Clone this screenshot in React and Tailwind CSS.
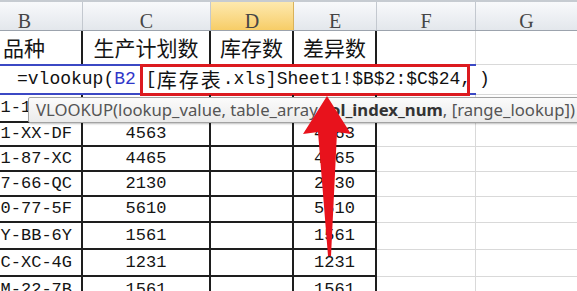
import React from 'react';

const mono = "font-['Liberation_Mono','Noto_Sans_CJK_SC',monospace]";

const rows = [
  { h: 'h-[28px]', b: '1-1A-XC', c: '3542', e: '3542' },
  { h: 'h-[24px]', b: '1-XX-DF', c: '4563', e: '4563' },
  { h: 'h-[25px]', b: '1-87-XC', c: '4465', e: '4465' },
  { h: 'h-[25px]', b: '7-66-QC', c: '2130', e: '2130' },
  { h: 'h-[26px]', b: '0-77-5F', c: '5610', e: '5610' },
  { h: 'h-[27px]', b: 'Y-BB-6Y', c: '1561', e: '1561' },
  { h: 'h-[27px]', b: 'C-XC-4G', c: '1231', e: '1231' },
  { h: 'h-[27px]', b: 'M-22-7B', c: '1561', e: '1561' },
];

const black = 'border-r-2 border-b-2 border-[#1e1e1e]';

export default function App() {
  return (
    <div className="relative w-[577px] h-[291px] overflow-hidden bg-white">
      <div className="w-[610px] -ml-[33px]">
        {/* column headers */}
        <div className="flex h-[31px] border-t-2 border-[#c6cbd1] border-b border-b-[#9ca3ad] font-['Liberation_Serif',serif] text-[20px] text-[#454545]">
          <div className="w-[116px] flex justify-center pt-[4px] bg-gradient-to-b from-[#f8f9fb] to-[#e3e7ec] border-r border-[#c3c8cf]">B</div>
          <div className="w-[128px] flex justify-center pt-[4px] bg-gradient-to-b from-[#f8f9fb] to-[#e3e7ec] border-r border-[#c3c8cf]">C</div>
          <div className="w-[83px] flex justify-center pt-[4px] bg-gradient-to-b from-[#fde9ae] to-[#f7cd66] border-r border-[#d9b25a]">D</div>
          <div className="w-[83px] flex justify-center pt-[4px] bg-gradient-to-b from-[#f8f9fb] to-[#e3e7ec] border-r border-[#c3c8cf]">E</div>
          <div className="w-[99px] flex justify-center pt-[4px] bg-gradient-to-b from-[#f8f9fb] to-[#e3e7ec] border-r border-[#c3c8cf]">F</div>
          <div className="flex-1 flex justify-center pt-[4px] bg-gradient-to-b from-[#f8f9fb] to-[#e3e7ec]">G</div>
        </div>

        {/* title row */}
        <div className="flex h-[33px] font-['Noto_Sans_CJK_SC',sans-serif] text-[21px] text-[#141414]">
          <div className="w-[116px] flex items-center justify-center border-r-2 border-[#1e1e1e]">品种</div>
          <div className="w-[128px] flex items-center justify-center border-r-2 border-[#1e1e1e]">生产计划数</div>
          <div className="w-[83px] flex items-center justify-center border-r-2 border-[#1e1e1e]">库存数</div>
          <div className="w-[83px] flex items-center justify-center border-r-2 border-[#1e1e1e]">差异数</div>
          <div className="w-[99px] border-r border-[#d9d9d9]" />
          <div className="flex-1" />
        </div>

        {/* formula being edited */}
        <div className={`flex h-[31px] ${mono} text-[18px] text-[#111]`}>
          <div className="w-[509px] flex items-center pl-[50px] border-y-2 border-[#3b48c4] bg-white">
            <span>=vlookup(</span>
            <span className="text-[#2f36c9]">B2</span>
            <span className="ml-[4px] h-[32px] flex items-center pl-[3px] border-[3px] border-[#dc1a1f] bg-white">
              <span>[</span>
              <span className="font-['Noto_Sans_CJK_SC',sans-serif] text-[20px] tracking-[2px]">库存表</span>
              <span>.xls]Sheet1!$B$2:$C$24</span>
              <span className="-mr-[4px]">,</span>
            </span>
          </div>
          <div className="flex-1 flex items-center pl-[3px] border-y border-[#d9d9d9]">)</div>
        </div>

        {/* data */}
        {rows.map((r, i) => (
          <div key={i} className={`flex ${r.h} ${mono} text-[17px] text-[#141414]`}>
            <div className={`w-[116px] flex items-center justify-end pr-[9px] ${black}`}>{r.b}</div>
            <div className={`w-[128px] flex items-center justify-center ${black}`}>{r.c}</div>
            <div className={`w-[83px] ${black}`} />
            <div className={`w-[83px] flex items-center justify-center ${black}`}>{r.e}</div>
            <div className="w-[99px] border-r border-b border-[#d9d9d9]" />
            <div className="flex-1 border-b border-[#d9d9d9]" />
          </div>
        ))}
      </div>

      {/* function tooltip */}
      <div className="absolute left-[28px] top-[97px] w-[570px] h-[26px] flex items-center pl-[7px] whitespace-nowrap border border-[#a3a3a3] rounded-[2px] bg-gradient-to-b from-[#fbfbfb] to-[#ebebeb] shadow-[1px_1px_2px_rgba(0,0,0,0.25)] font-['Noto_Sans',sans-serif] text-[16.7px] text-[#555]">
        VLOOKUP(lookup_value, table_array, <span className="font-bold text-[#333]">col_index_num</span>, [range_lookup])
      </div>

      {/* red arrow */}
      <svg className="absolute left-0 top-0 pointer-events-none" width="577" height="291" viewBox="0 0 577 291">
        <polygon
          points="327,96 351,134 337,132 331,256 328,256 318,132 303,134"
          fill="#e8121c"
        />
      </svg>
    </div>
  );
}
